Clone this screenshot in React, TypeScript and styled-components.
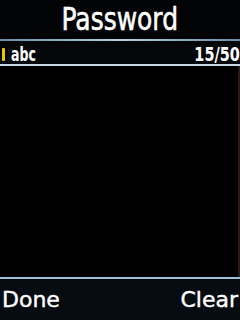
import React from "react";
import styled, { createGlobalStyle } from "styled-components";

const Global = createGlobalStyle`
  html, body { margin: 0; padding: 0; background: #000; }
  #root { width: 240px; height: 320px; }
`;

const Screen = styled.div`
  width: 240px;
  height: 320px;
  background: #000;
  display: flex;
  flex-direction: column;
  font-family: "DejaVu Sans", sans-serif;
  color: #fff;
  overflow: hidden;
`;

const Title = styled.div`
  height: 39px;
  display: flex;
  align-items: center;
  justify-content: center;
  font-size: 32px;
  line-height: 1;
  padding-bottom: 1px;
  box-sizing: border-box;
  background: #020305;
  -webkit-text-stroke: 0.6px #fff;
`;

const Narrow = styled.span<{ $scale: number; $origin?: string }>`
  display: inline-block;
  transform: scaleX(${(p) => p.$scale});
  transform-origin: ${(p) => p.$origin || "center"};
  white-space: nowrap;
`;

const Rule = styled.div<{ $color: string }>`
  height: 2px;
  background: ${(p) => p.$color};
`;

const InputRow = styled.div`
  height: 23px;
  display: flex;
  align-items: center;
  padding: 2px 0 0 2px;
  box-sizing: border-box;
  font-weight: bold;
  font-size: 19px;
  background: #04060a;
`;

const Cursor = styled.span`
  width: 3px;
  height: 13px;
  background: #e6c800;
  border-radius: 1px;
  margin-right: 6px;
  margin-top: 1px;
`;

const Value = styled.span`
  flex: 1;
`;

const Body = styled.div`
  flex: 1;
  background: #000;
  border-right: 2px solid #2a1a16;
`;

const SoftKeys = styled.div`
  height: 41px;
  border-top: 2px solid #9fc0d4;
  background: #070b12;
  display: flex;
  align-items: center;
  justify-content: space-between;
  padding: 0 2px 0 2px;
  font-size: 22px;
  -webkit-text-stroke: 0.4px #fff;
`;

export default function App() {
  return (
    <>
      <Global />
      <Screen>
        <Title>
          <Narrow $scale={0.78}>Password</Narrow>
        </Title>
        <Rule $color="linear-gradient(90deg, #6a8ca4, #b4d0e2 50%, #6a8ca4)" />
        <InputRow>
          <Cursor />
          <Value>
            <Narrow $scale={0.66} $origin="left">abc</Narrow>
          </Value>
          <Narrow $scale={0.76} $origin="right">15/50</Narrow>
        </InputRow>
        <Rule $color="#c8d8e4" />
        <Body />
        <SoftKeys>
          <span>Done</span>
          <span>Clear</span>
        </SoftKeys>
      </Screen>
    </>
  );
}
